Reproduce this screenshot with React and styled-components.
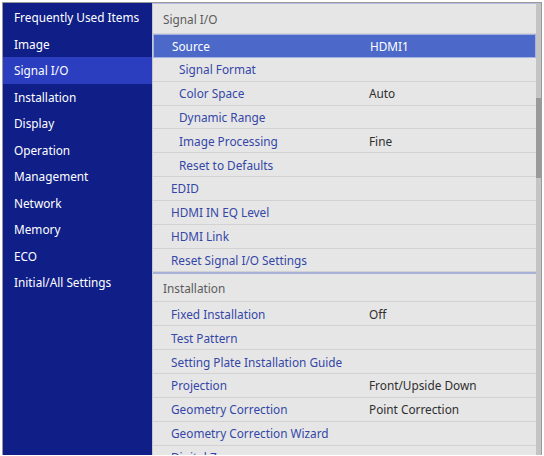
import React from "react";
import styled, { createGlobalStyle } from "styled-components";

const Global = createGlobalStyle`
  body {
    margin: 0;
    background: #ffffff;
    font-family: "Noto Sans", "Open Sans", sans-serif;
  }
`;

const Frame = styled.div`
  display: flex;
  margin: 2px 2px 0 2px;
  height: 452px;
  border: 1px solid #9a9a9a;
  border-bottom: none;
  overflow: hidden;
`;

const Sidebar = styled.div`
  width: 149px;
  flex-shrink: 0;
  background: #0f1f87;
  padding-top: 1px;
`;

const NavItem = styled.div`
  height: 26.5px;
  display: flex;
  align-items: center;
  padding-left: 11px;
  font-size: 11.8px;
  color: #ffffff;
  background: ${(p) => (p.active ? "#2a3ebf" : "transparent")};
`;

const Panel = styled.div`
  flex: 1;
  display: flex;
  background: #e6e6e6;
  border-left: 1px solid #c9c9c9;
  border-top: 1px solid #b7bfe0;
`;

const List = styled.div`
  flex: 1;
  overflow: hidden;
`;

const Header = styled.div`
  height: ${(p) => p.h}px;
  display: flex;
  align-items: center;
  padding-left: 10px;
  font-size: 11.8px;
  color: #5b5b5b;
  border-top: ${(p) => (p.divider ? "2px solid #a8b1d8" : "none")};
  border-bottom: 1px solid #d2d2d2;
  box-sizing: border-box;
`;

const Row = styled.div`
  height: 23.85px;
  box-sizing: border-box;
  display: grid;
  grid-template-columns: 216px 1fr;
  align-items: center;
  font-size: 11.8px;
  background: ${(p) => (p.selected ? "#4c69c9" : "transparent")};
  border: ${(p) => (p.selected ? "1px solid #a3b1e3" : "none")};
  border-bottom: ${(p) => (p.selected ? "1px solid #a3b1e3" : "1px solid #d2d2d2")};
`;

const Label = styled.span`
  padding-left: ${(p) => (p.indent ? 26 : 18)}px;
  color: ${(p) => (p.selected ? "#ffffff" : "#3446a6")};
  white-space: nowrap;
`;

const Value = styled.span`
  color: ${(p) => (p.selected ? "#ffffff" : "#2e2e2e")};
  white-space: nowrap;
`;

const Track = styled.div`
  width: 5px;
  background: #c4c4c4;
  display: flex;
  flex-direction: column;
`;

const Thumb = styled.div`
  margin-top: 94px;
  height: 80px;
  background: #9a9a9a;
`;

const nav = [
  "Frequently Used Items",
  "Image",
  "Signal I/O",
  "Installation",
  "Display",
  "Operation",
  "Management",
  "Network",
  "Memory",
  "ECO",
  "Initial/All Settings",
];

const signalRows = [
  { label: "Source", value: "HDMI1", selected: true },
  { label: "Signal Format", indent: true },
  { label: "Color Space", value: "Auto", indent: true },
  { label: "Dynamic Range", indent: true },
  { label: "Image Processing", value: "Fine", indent: true },
  { label: "Reset to Defaults", indent: true },
  { label: "EDID" },
  { label: "HDMI IN EQ Level" },
  { label: "HDMI Link" },
  { label: "Reset Signal I/O Settings" },
];

const installRows = [
  { label: "Fixed Installation", value: "Off" },
  { label: "Test Pattern" },
  { label: "Setting Plate Installation Guide" },
  { label: "Projection", value: "Front/Upside Down" },
  { label: "Geometry Correction", value: "Point Correction" },
  { label: "Geometry Correction Wizard" },
  { label: "Digital Zoom" },
];

function MenuRow({ label, value, indent, selected }) {
  return (
    <Row selected={selected}>
      <Label indent={indent} selected={selected}>
        {label}
      </Label>
      <Value selected={selected}>{value}</Value>
    </Row>
  );
}

export default function App() {
  return (
    <>
      <Global />
      <Frame>
        <Sidebar>
          {nav.map((n) => (
            <NavItem key={n} active={n === "Signal I/O"}>
              {n}
            </NavItem>
          ))}
        </Sidebar>
        <Panel>
          <List>
            <Header h={30}>Signal I/O</Header>
            {signalRows.map((r) => (
              <MenuRow key={r.label} {...r} />
            ))}
            <Header h={30} divider>
              Installation
            </Header>
            {installRows.map((r) => (
              <MenuRow key={r.label} {...r} />
            ))}
          </List>
          <Track>
            <Thumb />
          </Track>
        </Panel>
      </Frame>
    </>
  );
}
